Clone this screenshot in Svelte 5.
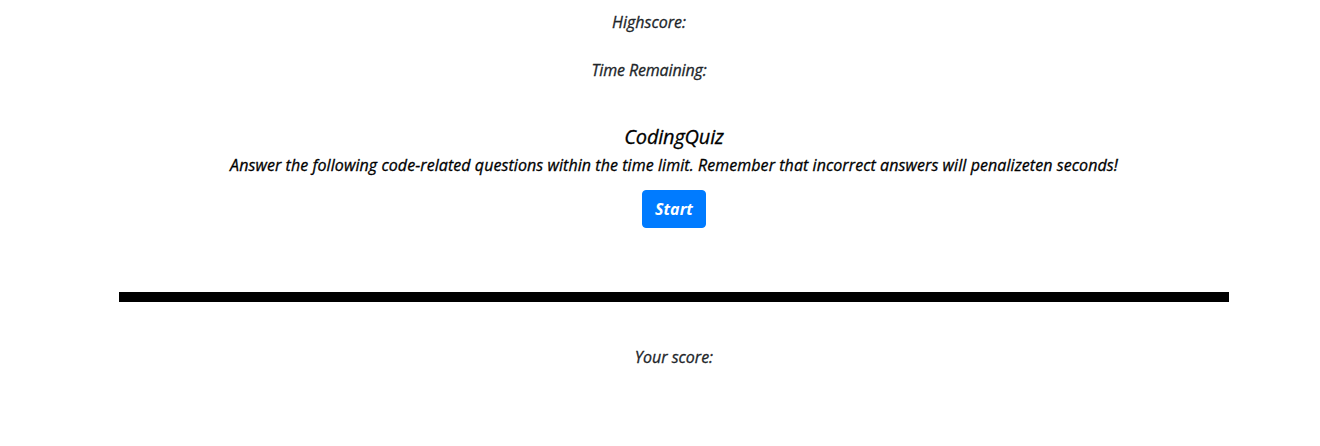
<script>
  const scoreLabel = 'Highscore:';
  const timeLabel = 'Time Remaining:';
</script>

<main>
  <p class="line high">{scoreLabel}</p>
  <p class="line time">{timeLabel}</p>
  <section>
    <h5>CodingQuiz</h5>
    <p class="intro">Answer the following code-related questions within the time limit. Remember that incorrect answers will penalizeten seconds!</p>
    <button>Start</button>
  </section>
  <hr />
  <p class="line result">Your score:</p>
</main>

<style>
  :global(body) { background: #fff; overflow: hidden; }
  main { font: italic 500 16px/24px "Open Sans", sans-serif; color: #212529; padding-left: 119px; width: 1110px; text-align: center; -webkit-text-stroke: 0.3px currentColor; }
  p, h5 { margin: 0; white-space: nowrap; }
  .line { height: 24px; }
  .high { padding: 10px 50px 0 0; }
  .time { padding: 24px 50px 0 0; letter-spacing: -0.13px; }
  section { color: #000; padding-top: 43px; height: 167px; }
  h5 { font: inherit; font-size: 20px; line-height: 24px; letter-spacing: -0.2px; }
  .intro { margin-top: 4px; letter-spacing: 0.07px; }
  button { display: block; font: inherit; font-weight: 700; color: #fff; background: #007bff; border: 1px solid #007bff; border-radius: 4px; width: 64px; height: 38px; padding: 0; margin: 13px auto 0; -webkit-text-stroke: 0; }
  hr { border: 0; height: 10px; margin: 0; background: #000; }
  .result { padding-top: 43px; }
</style>
